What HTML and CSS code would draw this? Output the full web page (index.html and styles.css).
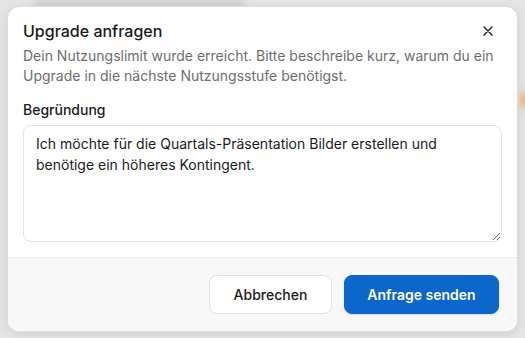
FILE: index.html
```html
<!DOCTYPE html>
<html lang="de">
<head>
<meta charset="utf-8">
<link rel="stylesheet" href="styles.css">
</head>
<body>
<div class="backdrop">
  <div class="ghost-text"></div>
  <div class="ghost-accent"></div>
</div>
<div class="modal" role="dialog">
  <div class="modal-body">
    <div class="modal-head">
      <h2 class="title">Upgrade anfragen</h2>
      <button class="close" aria-label="Schließen">
        <svg width="10" height="10" viewBox="0 0 10 10"><path d="M1 1L9 9M9 1L1 9" stroke="#1f1f1f" stroke-width="1.4" stroke-linecap="round"/></svg>
      </button>
    </div>
    <p class="desc">Dein Nutzungslimit wurde erreicht. Bitte beschreibe kurz, warum du ein Upgrade in die nächste Nutzungsstufe benötigst.</p>
    <label class="label" for="reason">Begründung</label>
    <textarea id="reason" class="field">Ich möchte für die Quartals-Präsentation Bilder erstellen und benötige ein höheres Kontingent.</textarea>
  </div>
  <div class="modal-foot">
    <button class="btn btn-secondary">Abbrechen</button>
    <button class="btn btn-primary">Anfrage senden</button>
  </div>
</div>
</body>
</html>
```

FILE: styles.css
```css
* { box-sizing: border-box; }
html, body { margin: 0; height: 100%; }
body {
  background: #e4e4e4;
  font-family: Inter, "Noto Sans", sans-serif;
  position: relative;
  overflow: hidden;
}
.backdrop { position: absolute; inset: 0; }
.ghost-text {
  position: absolute;
  left: 34px; top: 1px;
  width: 210px; height: 6px;
  background: #c8c8c8;
  filter: blur(3px);
}
.ghost-accent {
  position: absolute;
  right: -4px; top: 92px;
  width: 8px; height: 16px;
  background: #e9b36a;
  filter: blur(3px);
}
.modal {
  position: absolute;
  left: 7px; top: 6px;
  width: 511px; height: 326px;
  background: #fff;
  border-radius: 12px;
  border: 1px solid #dcdcdc;
  box-shadow: 0 2px 10px rgba(0,0,0,0.08);
  overflow: hidden;
  display: flex;
  flex-direction: column;
}
.modal-body {
  padding: 13px 15px 0 15px;
  flex: 1;
  display: flex;
  flex-direction: column;
}
.modal-head {
  display: flex;
  justify-content: space-between;
  align-items: center;
}
.title {
  margin: 0;
  font-size: 16px;
  line-height: 22px;
  font-weight: 500;
  color: #1a1a1a;
}
.close {
  border: 0;
  background: none;
  padding: 0;
  width: 10px; height: 10px;
  margin-right: 9px;
  display: flex;
}
.desc {
  margin: 4px 0 0;
  font-size: 14px;
  line-height: 20px;
  color: #6e6e6e;
}
.label {
  margin-top: 14px;
  font-size: 14px;
  line-height: 20px;
  font-weight: 500;
  color: #1a1a1a;
}
.field {
  margin-top: 5px;
  height: 117px;
  width: 100%;
  border: 1px solid #e2e2e2;
  border-radius: 8px;
  padding: 7px 12px;
  font-family: Inter, "Noto Sans", sans-serif;
  font-size: 14px;
  line-height: 21px;
  color: #1a1a1a;
  resize: vertical;
  outline: none;
}
.modal-foot {
  height: 74px;
  background: #f8f8f8;
  border-top: 1px solid #ececec;
  display: flex;
  justify-content: flex-end;
  align-items: center;
  gap: 12px;
  padding: 0 18px 1px 0;
}
.btn {
  height: 39px;
  border-radius: 8px;
  font-family: Inter, "Noto Sans", sans-serif;
  font-size: 14px;
  padding: 0;
  white-space: nowrap;
}
.btn-secondary {
  background: #fff;
  border: 1px solid #e2e2e2;
  color: #1a1a1a;
  font-weight: 500;
  width: 123px;
}
.btn-primary {
  background: #0b67c9;
  border: 1px solid #0b67c9;
  color: #fff;
  font-weight: 600;
  width: 155px;
  box-shadow: 0 1px 2px rgba(0,0,0,0.12);
}
```
